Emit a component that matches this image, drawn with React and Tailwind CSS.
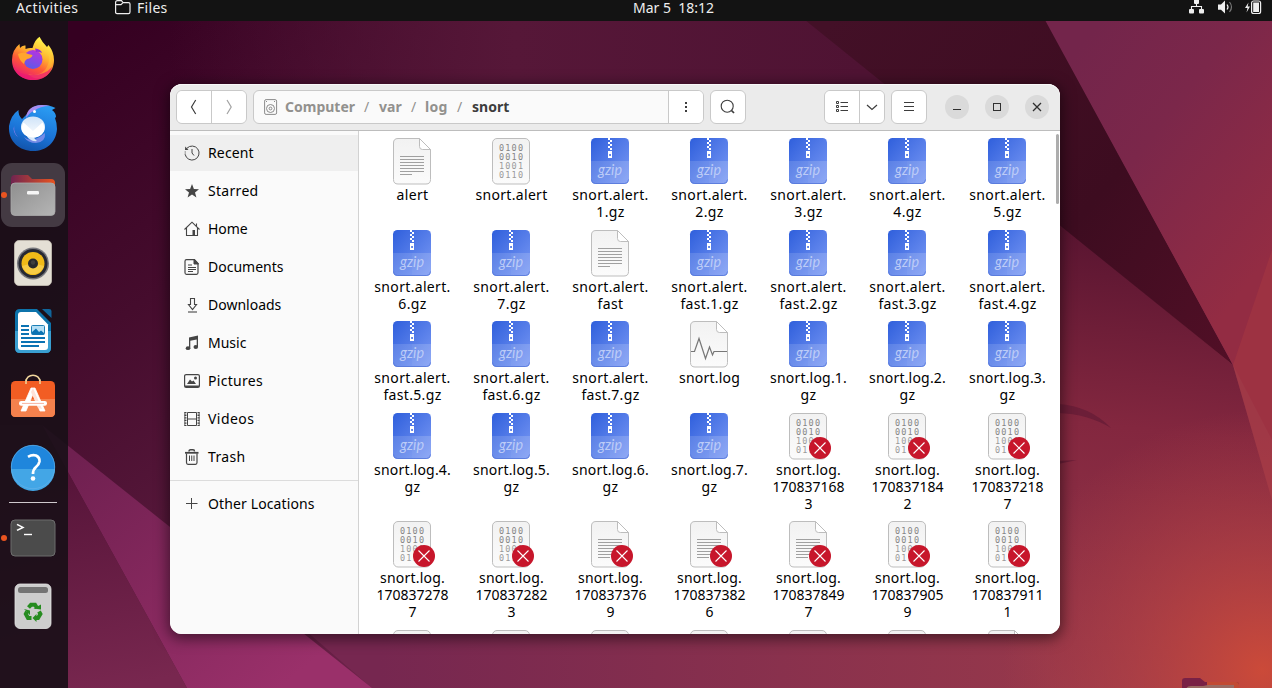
import React from "react";

const FONT = "font-['Noto_Sans',sans-serif]";

function Wallpaper() {
  return (
    <svg className="absolute inset-0" width="1272" height="688" viewBox="0 0 1272 688">
      <defs>
        <linearGradient id="base" gradientUnits="userSpaceOnUse" x1="80" y1="40" x2="560" y2="720">
          <stop offset="0" stopColor="#350021" />
          <stop offset="0.3" stopColor="#450c2d" />
          <stop offset="0.6" stopColor="#5a1a3d" />
          <stop offset="1" stopColor="#7a2751" />
        </linearGradient>
        <linearGradient id="topMid" gradientUnits="userSpaceOnUse" x1="170" y1="0" x2="860" y2="0">
          <stop offset="0" stopColor="#561738" stopOpacity="0" />
          <stop offset="0.5" stopColor="#561738" />
          <stop offset="1" stopColor="#4f1333" />
        </linearGradient>
        <linearGradient id="low" gradientUnits="userSpaceOnUse" x1="1060" y1="230" x2="1010" y2="700">
          <stop offset="0" stopColor="#5a1531" />
          <stop offset="0.4" stopColor="#83273f" />
          <stop offset="1" stopColor="#99394c" />
        </linearGradient>
        <linearGradient id="lowFade" gradientUnits="userSpaceOnUse" x1="380" y1="0" x2="1060" y2="0">
          <stop offset="0" stopColor="#762750" />
          <stop offset="1" stopColor="#96384b" />
        </linearGradient>
        <radialGradient id="glow" gradientUnits="userSpaceOnUse" cx="1262" cy="670" r="260">
          <stop offset="0" stopColor="#cb4a39" />
          <stop offset="0.5" stopColor="#b94442" stopOpacity="0.55" />
          <stop offset="1" stopColor="#b04044" stopOpacity="0" />
        </radialGradient>
        <linearGradient id="dark" gradientUnits="userSpaceOnUse" x1="830" y1="20" x2="1233" y2="365">
          <stop offset="0" stopColor="#431027" />
          <stop offset="0.6" stopColor="#3d0c20" />
          <stop offset="1" stopColor="#520f26" />
        </linearGradient>
        <linearGradient id="right" gradientUnits="userSpaceOnUse" x1="1070" y1="60" x2="1290" y2="230">
          <stop offset="0" stopColor="#73254b" />
          <stop offset="0.4" stopColor="#7b274a" />
          <stop offset="1" stopColor="#932c43" />
        </linearGradient>
        <linearGradient id="beam" gradientUnits="userSpaceOnUse" x1="80" y1="450" x2="280" y2="688">
          <stop offset="0" stopColor="#6f2050" />
          <stop offset="1" stopColor="#9a306a" />
        </linearGradient>
        <linearGradient id="beamLow" gradientUnits="userSpaceOnUse" x1="70" y1="470" x2="120" y2="688">
          <stop offset="0" stopColor="#561439" />
          <stop offset="1" stopColor="#78274f" />
        </linearGradient>
      </defs>
      <rect width="1272" height="688" fill="url(#base)" />
      <rect x="170" y="20" width="900" height="90" fill="url(#topMid)" />
      <path d="M372 688L305 630H1060V200L1233 365L1272 420V688Z" fill="url(#lowFade)" />
      <path d="M1050 216L1233 365L1272 500V688H1050Z" fill="url(#low)" />
      <rect x="900" y="365" width="372" height="323" fill="url(#glow)" />
      <path d="M805 20H1046L1233 365Z" fill="url(#dark)" />
      <path d="M1045 20H1272V440L1233 365Z" fill="url(#right)" />
      <path d="M1272 250L1233 365L1272 500Z" fill="#a83842" opacity="0.5" />
      <path d="M42 425L372 688H187Z" fill="url(#beam)" />
      <path d="M42 425L187 688H0V425Z" fill="url(#beamLow)" />
      <path d="M1058 404Q1090 406 1111 428Q1088 414 1058 413Z" fill="#6c1e38" />
      <path d="M1058 461L1077 460L1058 464Z" fill="#6c1e38" />
      <path d="M1182 690V681Q1182 678 1185 678H1200L1205 682H1236Q1239 682 1239 685V690Z" fill="#7a2145" />
      <path d="M1207 682H1236Q1239 682 1239 685V690H1207Z" fill="#c24a33" />
      <path d="M1186 690Q1186 686 1191 686H1203L1208 685H1234V690Z" fill="#9b6a62" />
    </svg>
  );
}

function Slot({ children, active, running }) {
  return (
    <div className="relative h-[68px] w-[68px] shrink-0">
      {active && <div className="absolute left-px top-[2px] h-16 w-16 rounded-[11px] bg-[#443a43]" />}
      {running && <div className="absolute left-[1px] top-[31px] h-[6px] w-[6px] rounded-full bg-[#e95420]" />}
      <svg className="relative block" width="68" height="68" viewBox="0 0 68 68">{children}</svg>
    </div>
  );
}

function Dock() {
  return (
    <div className="flex w-[68px] flex-col bg-[#180f17]/90 pt-1">
      <Slot>
        <defs>
          <linearGradient id="fx" x1="0.75" y1="0.1" x2="0.3" y2="1">
            <stop offset="0" stopColor="#fff14a" />
            <stop offset="0.35" stopColor="#ffb02e" />
            <stop offset="0.62" stopColor="#ff5a36" />
            <stop offset="1" stopColor="#e8147a" />
          </linearGradient>
          <linearGradient id="fxp" x1="0.7" y1="0" x2="0.3" y2="1">
            <stop offset="0" stopColor="#b833e1" />
            <stop offset="1" stopColor="#5b5be8" />
          </linearGradient>
        </defs>
        <path d="M12 35Q12 25 19.5 19L20 23Q22 20 25.500 20.500V24Q29 22.500 32.500 23Q34.500 15 39.500 11.700Q42 17 47 22L48.500 20Q54 27 54 35C54 47 45 55 33 55S12 47 12 35Z" fill="url(#fx)" />
        <path d="M45 22Q53 34 45 45Q38 52 28 49Q38 58 48 49Q57 38 45 22Z" fill="#ffd43a" opacity="0.35" />
        <path d="M13 40Q19 51 33 50Q45 50 52 42Q48 55 33 55Q17 54 13 40Z" fill="#ed1a72" opacity="0.7" />
        <circle cx="33" cy="34.500" r="9.500" fill="url(#fxp)" />
        <path d="M18 29Q24 26.500 28 29L32.500 30Q32 33 27 34Q24 36 24 39Q19 35 18 29Z" fill="#ffa52e" />
        <path d="M35 23.500Q41 24 42 28Q38 26 36 27Z" fill="#9130d6" />
      </Slot>
      <Slot>
        <defs>
          <linearGradient id="tb" x1="0.6" y1="0" x2="0.3" y2="1">
            <stop offset="0" stopColor="#2a9bf2" />
            <stop offset="0.6" stopColor="#1a72d6" />
            <stop offset="1" stopColor="#1252a8" />
          </linearGradient>
          <linearGradient id="mail" x1="0" y1="0" x2="0" y2="1">
            <stop offset="0" stopColor="#cfe3f8" />
            <stop offset="1" stopColor="#ffffff" />
          </linearGradient>
        </defs>
        <path d="M9 33Q11 22 18.500 17Q18 22 22 26L28 20Q32 12 42 12Q50 12 55.500 15L52 17Q56 20 56 24L55 25Q57 30 57 36C56 50 46 58 33 58S8 49 9 33Z" fill="url(#tb)" />
        <path d="M26 25Q27 12.500 42 12Q47 12 50 13Q40 13 34 18Q30 19 26 25Z" fill="#a88df0" />
        <path d="M15 29Q12 38 18 44Q14.500 42 13.500 36Z" fill="#8a7de8" />
        <path d="M24 44Q32 51 45 40Q46 49 36 50Q28 50 24 44Z" fill="#8b93ee" opacity="0.8" />
        <ellipse cx="33" cy="34" rx="12" ry="10.500" fill="url(#mail)" />
        <path d="M26 42Q30 49 37 48Q34 46 34 43Z" fill="#d9e9fa" />
        <path d="M23.500 29.500L33 38L42.500 29.500Q45 34 44 38Q40 45 33 44.500Q25 44 22 38Q21 34 23.500 29.500Z" fill="#fff" />
        <circle cx="34.500" cy="18.500" r="1.500" fill="#fff" />
      </Slot>
      <Slot active running>
        <defs>
          <linearGradient id="fld" x1="0" x2="1" y1="0" y2="0">
            <stop offset="0" stopColor="#702450" />
            <stop offset="1" stopColor="#e95420" />
          </linearGradient>
          <linearGradient id="fldf" x1="0" x2="1" y1="0" y2="1">
            <stop offset="0" stopColor="#8f8f8f" />
            <stop offset="1" stopColor="#b5b5b5" />
          </linearGradient>
        </defs>
        <path d="M11 30V18Q11 14 15 14H28L32 18H51Q55 18 55 22V30Z" fill="url(#fld)" />
        <rect x="11" y="22" width="44" height="32.500" rx="4" fill="url(#fldf)" stroke="#aaa" strokeWidth="0.800" />
        <rect x="27" y="30" width="12" height="3.500" rx="1.200" fill="#f6f6f6" />
      </Slot>
      <Slot>
        <rect x="14.500" y="11.500" width="37" height="45" rx="4.500" fill="#e4dfd5" stroke="#c9c3b8" strokeWidth="0.800" />
        <circle cx="33" cy="34.500" r="16" fill="#77777c" />
        <circle cx="33" cy="34.500" r="14.500" fill="#262833" />
        <circle cx="33" cy="34.500" r="11.500" fill="#f0ba18" />
        <path d="M22 37A11.500 11.500 0 0 0 44 37L33 34Z" fill="#f7cc45" />
        <circle cx="33" cy="34.500" r="5" fill="#27282c" />
        <circle cx="33" cy="33.500" r="2.200" fill="#3e3e3e" />
      </Slot>
      <Slot>
        <path d="M20 12H37L51 26V51Q51 56 46 56H20Q15 56 15 51V17Q15 12 20 12Z" fill="#0d73ab" />
        <path d="M15 34H51V51Q51 56 46 56H20Q15 56 15 51Z" fill="#399fd1" />
        <path d="M21 15H36L48 27.500V50Q48 53 45 53H21Q18 53 18 50V18Q18 15 21 15Z" fill="#fff" />
        <path d="M42 12H49Q51.500 12 51.500 14V21Z" fill="#10659b" />
        <path d="M21 29H29M21 33H29M21 37H29M21 41H45M21 45H45M21 49H39" stroke="#0b73b3" strokeWidth="1.800" />
        <rect x="31.500" y="28.500" width="13" height="9" rx="1" fill="#b4dff5" stroke="#1d7fb6" />
        <path d="M32 37.500V35L36 31.500L39 35L41 33.500L44 36V37.500Z" fill="#0b73b3" />
      </Slot>
      <Slot>
        <path d="M26 19V17C26 8 40 8 40 17V19" fill="none" stroke="#f0d59c" strokeWidth="1.500" />
        <rect x="11" y="16" width="44" height="36" rx="4.500" fill="#f25d23" />
        <path d="M11 34H55V47.500Q55 52 50.500 52H15.500Q11 52 11 47.500Z" fill="#f4814d" />
        <path d="M26 14.500V19M40 14.500V19" stroke="#f0d59c" strokeWidth="1.500" />
        <path d="M31 23L21 46H26L33 29L40 46H45L35 23Z" fill="#fff" stroke="#fff" strokeWidth="0.800" />
        <path d="M33 23L42 44L38 43L31 27Z" fill="#ffe2d8" />
        <rect x="19" y="36" width="28" height="4.800" rx="2.200" fill="#fff" />
        <path d="M22 38.400H44" stroke="#f6b3a0" strokeWidth="1" />
      </Slot>
      <Slot>
        <circle cx="33" cy="34" r="22" fill="#1f86dc" />
        <path d="M11 36H55A22 22 0 0 1 11 36Z" fill="#43a6e6" />
        <circle cx="33" cy="34" r="21.700" fill="none" stroke="#63b2ea" strokeWidth="0.700" />
        <path d="M28 23.800Q32 21.500 36 22.500Q40 24.500 39.500 28.500Q39 31.500 36 34Q33 36.500 33 41" fill="none" stroke="#fff" strokeWidth="2.700" />
        <circle cx="33" cy="45.500" r="2.300" fill="#fff" />
      </Slot>
      <div className="mx-[9px] my-px h-px w-12 bg-[#cfc9cd]" />
      <Slot running>
        <rect x="11" y="16" width="44" height="36" rx="4" fill="#4b4b4b" stroke="#6d6d6d" />
        <path d="M17 20.500L23 24L17 27.500" fill="none" stroke="#fff" strokeWidth="1.700" transform="translate(0,3) scale(1,.85)" />
        <path d="M24 30.500H32" stroke="#fff" strokeWidth="1.400" />
      </Slot>
      <Slot>
        <rect x="15" y="12" width="36" height="44.500" rx="5" fill="#cdcdcd" stroke="#e3e3e3" strokeWidth="0.800" />
        <rect x="18" y="15" width="30" height="6" rx="2.500" fill="#747474" />
        <g fill="none" stroke="#268c20" strokeWidth="4">
          <path d="M28.500 35.500L31 32.800H35L37 36" />
          <path d="M27 39.500L25.800 42L28 46H31.500" />
          <path d="M35 46H38L40.400 42L39 39.500" />
        </g>
        <path d="M33.500 36.500L41 37.500V32.500Z M24 37L30 38.500L30 43Z M36.500 42V50L32.500 46Z" fill="#268c20" />
      </Slot>
    </div>
  );
}

function TopBar() {
  return (
    <div className="relative flex h-[21px] shrink-0 bg-[#131313] text-[14px] leading-[15px] text-[#eeeeee]">
      <span className="ml-4 w-[98px] tracking-[0.4px]">Activities</span>
      <svg className="mt-[-1px]" width="17" height="17" viewBox="0 0 17 17" fill="none" stroke="#eee" strokeWidth="1.200">
        <path d="M1.600 14V3.500Q1.600 1.600 3.500 1.600H7.500L9 3.600H14.500Q16 3.600 16 5V13Q16 14.600 14.500 14.600H3Q1.600 14.600 1.600 13Z M1.600 5.600H7L9 3.600" />
      </svg>
      <span className="ml-[6px] tracking-[0.3px]">Files</span>
      <span className="absolute left-[633px] top-0 whitespace-pre">Mar 5  18:12</span>
      <svg className="ml-auto mr-[9px]" width="74" height="16" viewBox="1189 0 74 16" fill="#eee">
        <rect x="1194" y="-1" width="5" height="5" rx="1" />
        <rect x="1189" y="9" width="5" height="4.500" rx="1" />
        <rect x="1199" y="9" width="5" height="4.500" rx="1" />
        <path d="M1196.500 3V6.500M1191.500 10V6.500H1201.500V10" fill="none" stroke="#eee" strokeWidth="1.100" />
        <path d="M1218 4.500H1221L1225 0.500V13.500L1221 9.800H1218Z" />
        <path d="M1227 4.500Q1229 7 1227 9.500" fill="none" stroke="#eee" strokeWidth="1.200" />
        <path d="M1229.500 2Q1233.500 7 1229.500 12" fill="none" stroke="#777" strokeWidth="1.200" />
        <path d="M1248.500 2.500L1245 8H1247.500L1246.500 12.500L1250 6.500H1247.700Z" />
        <rect x="1251.600" y="1" width="9" height="12.500" rx="2" fill="none" stroke="#eee" strokeWidth="1.200" />
        <rect x="1253.200" y="2.500" width="5.800" height="9.500" />
      </svg>
    </div>
  );
}

const btn = "flex items-center justify-center bg-white";

function Header() {
  return (
    <div className="flex h-[47px] shrink-0 items-start rounded-t-xl border-b border-[#bdbdbd] bg-[#ebebeb] pl-[6px] pt-[6px] shadow-[inset_0_1px_0_#f8f8f8]">
      <div className="flex h-[34px] w-[71px] overflow-hidden rounded-md border border-[#c9c9c9]">
        <div className={`${btn} w-[35px] border-r border-[#c9c9c9]`}>
          <svg width="16" height="16" viewBox="0 0 16 16" fill="none" stroke="#3d3d3d" strokeWidth="1.200"><path d="M9.700 1L5.500 8L9.700 15" /></svg>
        </div>
        <div className={`${btn} flex-1`}>
          <svg width="16" height="16" viewBox="0 0 16 16" fill="none" stroke="#a2a2a2" strokeWidth="1.200"><path d="M6 1L10.200 8L6 15" /></svg>
        </div>
      </div>
      <div className="ml-[6px] flex h-[34px] w-[451px] overflow-hidden rounded-md border border-[#c9c9c9] bg-[#fafafa] text-[14px] font-bold leading-8 text-[#92918e]">
        <svg className="ml-[10px] mt-2" width="14" height="16" viewBox="0 0 14 16" fill="none" stroke="#8b8b8b">
          <rect x="0.600" y="0.600" width="12" height="14.800" rx="1.500" />
          <circle cx="6.500" cy="9.500" r="4" /><circle cx="6.500" cy="9.500" r="1.400" />
          <path d="M2 2.500H3M10 2.500H11" />
        </svg>
        <span className="ml-[7px] w-[79px]">Computer</span>
        <span className="w-[15px] font-normal">/</span>
        <span className="w-[32px]">var</span>
        <span className="w-[14px] font-normal">/</span>
        <span className="w-[32px] tracking-[0.3px]">log</span>
        <span className="w-[15px] font-normal">/</span>
        <span className="text-[#3d3d3d]">snort</span>
        <div className="ml-auto flex w-[35px] items-center justify-center border-l border-[#c9c9c9] bg-white">
          <svg width="16" height="16" viewBox="0 0 16 16" fill="#3d3d3d"><path d="M7 3h2v2H7zM7 7h2v2H7zM7 11h2v2H7z" /></svg>
        </div>
      </div>
      <div className={`${btn} ml-[6px] h-[34px] w-9 rounded-md border border-[#c9c9c9]`}>
        <svg width="16" height="16" viewBox="0 0 16 16" fill="none" stroke="#3d3d3d" strokeWidth="1.100"><circle cx="7.200" cy="7.200" r="6" /><path d="M11.500 11.500L14 14" strokeWidth="1.700" /></svg>
      </div>
      <div className="ml-[78px] flex h-[34px] w-[61px] overflow-hidden rounded-md border border-[#c9c9c9]">
        <div className={`${btn} w-[35px] border-r border-[#c9c9c9]`}>
          <svg width="14" height="14" viewBox="0 0 14 14" fill="none" stroke="#3d3d3d"><path d="M1.500 1.500h2v2h-2zM1.500 5.500h2v2h-2zM1.500 9.500h2v2h-2zM5.500 2.500H13M5.500 6.500H13M5.500 10.500H13" /></svg>
        </div>
        <div className={`${btn} flex-1`}>
          <svg width="12" height="12" viewBox="0 0 12 12" fill="none" stroke="#3d3d3d" strokeWidth="1.200"><path d="M1 4L6 8.500L11 4" /></svg>
        </div>
      </div>
      <div className={`${btn} ml-[6px] h-[34px] w-9 rounded-md border border-[#c9c9c9]`}>
        <svg width="12" height="12" viewBox="0 0 12 12" stroke="#3d3d3d"><path d="M1 1.500H11M1 5.500H11M1 9.500H11" /></svg>
      </div>
      <div className="ml-[18px] mt-[5px] flex gap-4">
        <div className="flex h-6 w-6 items-center justify-center rounded-full bg-[#dadada]">
          <svg width="10" height="10" viewBox="0 0 10 10" stroke="#2f2f2f"><path d="M1 7.500H9" /></svg>
        </div>
        <div className="flex h-6 w-6 items-center justify-center rounded-full bg-[#dadada]">
          <svg width="10" height="10" viewBox="0 0 10 10" fill="none" stroke="#2f2f2f"><rect x="1.500" y="1.500" width="7" height="7" /></svg>
        </div>
        <div className="flex h-6 w-6 items-center justify-center rounded-full bg-[#dadada]">
          <svg width="10" height="10" viewBox="0 0 10 10" stroke="#2f2f2f" strokeWidth="1.300"><path d="M1 1L9 9M9 1L1 9" /></svg>
        </div>
      </div>
    </div>
  );
}

const INK = "#454545";
const PLACES = [
  ["Recent", <g fill="none" stroke={INK}><path d="M3 3.200A7 7 0 1 1 1.200 9.500" /><path d="M8 4V8L10 10.500" /><path d="M1.200 1.500L1 5H4.500Z" fill={INK} stroke="none" /><path d="M1.200 6.500V9.500" strokeDasharray="1 1" /></g>, "tracking-[0.15px]"],
  ["Starred", <path d="M8 1L9.900 6L15 6.200L11 9.400L12.400 14.500L8 11.600L3.600 14.500L5 9.400L1 6.200L6.100 6Z" fill={INK} />, "tracking-[0.3px]"],
  ["Home", <g fill="none" stroke={INK} strokeWidth="1.100"><path d="M0.500 8.500L8 1.200L15.500 8.500M2.500 7V14.500H13.500V7M12.500 2.500V5" /><path d="M8.500 9H11V14.500H8.500Z" fill={INK} stroke="none" /></g>, "tracking-[-0.05px]"],
  ["Documents", <g fill="none" stroke={INK} strokeWidth="1.200"><path d="M3 0.700H10.500L14 4.500V13.800Q14 15.300 12.500 15.300H2.500Q1 15.300 1 13.800V2.200Q1 .7 2.500 .7Z" /><path d="M10 .5L14.500 5H10ZM4 6H8" fill={INK} strokeWidth="1" /><path d="M4 8.500H12M4 10.500H12M4 12.500H9" strokeWidth="1" /></g>, "tracking-[0px]"],
  ["Downloads", <g fill="none" stroke={INK} strokeWidth="1.100"><path d="M6.500 1.500H10.500V7.500H12.500L8.500 12.500L4.500 7.500H6.500Z" /><path d="M4 15H13" /></g>, ""],
  ["Music", <g fill={INK}><path d="M5 2.500L14 .5V12H12.700V4.500L6.300 5.800V13.500H5Z" /><ellipse cx="4" cy="13.200" rx="2.300" ry="1.900" /><ellipse cx="11.800" cy="12" rx="2.300" ry="1.900" /></g>, "tracking-[0px]"],
  ["Pictures", <g><rect x=".6" y="1.600" width="14.800" height="12.800" rx="1.500" fill="none" stroke={INK} strokeWidth="1.200" /><path d="M1 12.500H15V14H1ZM3 11L6 6.500L8 8.500L9.500 7.500L12 11Z" fill={INK} /><circle cx="11.500" cy="5" r="1.500" fill={INK} /></g>, "tracking-[0.3px]"],
  ["Videos", <g fill="none" stroke={INK}><path d="M3.500 1.500H12.500V14.500H3.500ZM3.500 8H12.500" /><path d="M1.500 1V15M14.500 1V15" strokeWidth="2" strokeDasharray="1.300 1.300" /><path d="M.8 1V15M15.200 1V15" strokeWidth=".8" /></g>, "tracking-[0.45px]"],
  ["Trash", <g fill="none" stroke={INK}><path d="M2.500 4.500V13.500Q2.500 15.300 4 15.300H11.500Q13 15.300 13 13.500V4.500" strokeWidth="1.200" /><path d="M1 3.800H14.500" strokeWidth="1.800" /><path d="M5 2.500Q5 .8 6.500 .8H9Q10.500 .8 10.500 2.500" strokeWidth="1.500" /><path d="M5.500 6.500V12M7.750 6.500V12M10 6.500V12" /></g>, "tracking-[0.35px]"],
];

function Place({ name, icon, track, active }) {
  return (
    <div className={`flex h-9 items-center pl-[14px] ${active ? "bg-[#efefef]" : ""}`}>
      <svg width="16" height="16" viewBox="0 0 16 16">{icon}</svg>
      <span className={`-mt-[2px] ml-2 ${track}`}>{name}</span>
    </div>
  );
}

function Sidebar() {
  return (
    <div className="w-[189px] shrink-0 rounded-bl-xl border-r border-[#d2d2d2] bg-[#fafafa] pt-1 text-[14px] text-black">
      <div className="flex flex-col gap-[2px]">
        {PLACES.map(([name, icon, track], i) => <Place key={name} name={name} icon={icon} track={track} active={i === 0} />)}
      </div>
      <div className="mb-[5px] mt-[5px] h-px bg-[#dcdcdc]" />
      <Place name="Other Locations" track="tracking-[0.12px]" icon={<path d="M2 7.500H13.500M7.500 2V13" stroke={INK} fill="none" />} />
    </div>
  );
}

function FileIcon({ kind }) {
  const base = kind[0];
  return (
    <svg className="-ml-px block shrink-0 overflow-visible" width="38" height="47" viewBox="0 0 38 47">
      {base === "g" && (
        <g>
          <rect width="38" height="46" rx="4.500" fill="url(#gz)" />
          <path d="M0 23H38V41.500Q38 46 33.500 46H4.500Q0 46 0 41.500Z" fill="#fff" fillOpacity="0.13" />
          <rect x="19" y="23" width="19" height="22" fill="#fff" fillOpacity="0.04" />
          <path d="M0.500 41.500Q.5 45.500 4.500 45.500H33.500Q37.500 45.500 37.500 41.500" fill="none" stroke="#5476d8" strokeWidth="0.800" />
          <path d="M17 0h2v2h-2zM19 2h2v2h-2zM17 4h2v2h-2zM19 6h2v2h-2zM17 8h2v2h-2zM19 10h2v2h-2z" fill="#fff" />
          <path d="M17 13h4v7h-4zM18.200 16v2h1.700v-2z" fill="#fff" fillRule="evenodd" />
          <text x="7" y="37" fontFamily="Lato, sans-serif" fontStyle="italic" fontWeight="400" fontSize="15.500" textLength="24" lengthAdjust="spacingAndGlyphs" fill="#bccbf7">gzip</text>
        </g>
      )}
      {(base === "b" || base === "p") && (
        <g>
          <rect x="0.500" y="0.500" width="37" height="45.500" rx="4.500" fill="url(#paper)" stroke="#bdbdbd" />
          {base === "b" && (
            <g fontFamily="'DejaVu Sans Mono', monospace" fontSize="8.500" fill="#858585">
              <text x="7" y="13" textLength="24">0100</text>
              <text x="7" y="22" textLength="24">0010</text>
              <text x="7" y="31" textLength="24" fill="#9a9a9a">1001</text>
              <text x="7" y="40" textLength="24" fill="#9a9a9a">0110</text>
            </g>
          )}
        </g>
      )}
      {(base === "t" || base === "l") && (
        <g>
          <path d="M5 .5H26.500L37.500 11.500V41.500Q37.500 46 33 46H5Q.5 46 .5 41.500V5Q.5 .5 5 .5Z" fill="url(#paper)" stroke="#bdbdbd" />
          <path d="M26.500 .5V8.500Q26.500 11.500 29.500 11.500H37.500Z" fill="#fff" stroke="#bdbdbd" />
          {base === "t" && <path d="M7 18.500H31M7 21.500H31M7 24.500H31M7 27.500H31M7 30.500H31M7 33.500H31M7 36.500H19" stroke="#a0a0a0" />}
          {base === "l" && <path d="M1 30.500H4.500L9 17.500L15.500 37.500L19.500 26L22.500 34L24 30.500H37" fill="none" stroke="#777" strokeWidth="1.200" />}
        </g>
      )}
      {kind[1] === "x" && (
        <g>
          <circle cx="31" cy="35" r="11" fill="#c7162b" />
          <path d="M25.500 29.500L36.500 40.500M36.500 29.500L25.500 40.500" stroke="#fff" strokeWidth="1.100" />
        </g>
      )}
    </svg>
  );
}

const ROWS = [
  { h: "h-[92px]", files: [["t", "alert"], ["b", "snort.alert"], ["g", "snort.alert.", "1.gz"], ["g", "snort.alert.", "2.gz"], ["g", "snort.alert.", "3.gz"], ["g", "snort.alert.", "4.gz"], ["g", "snort.alert.", "5.gz"]] },
  { h: "h-[91px]", files: [["g", "snort.alert.", "6.gz"], ["g", "snort.alert.", "7.gz"], ["t", "snort.alert.", "fast"], ["g", "snort.alert.", "fast.1.gz"], ["g", "snort.alert.", "fast.2.gz"], ["g", "snort.alert.", "fast.3.gz"], ["g", "snort.alert.", "fast.4.gz"]] },
  { h: "h-[92px]", files: [["g", "snort.alert.", "fast.5.gz"], ["g", "snort.alert.", "fast.6.gz"], ["g", "snort.alert.", "fast.7.gz"], ["l", "snort.log"], ["g", "snort.log.1.", "gz"], ["g", "snort.log.2.", "gz"], ["g", "snort.log.3.", "gz"]] },
  { h: "h-[108px]", files: [["g", "snort.log.4.", "gz"], ["g", "snort.log.5.", "gz"], ["g", "snort.log.6.", "gz"], ["g", "snort.log.7.", "gz"], ["bx", "snort.log.", "170837168", "3"], ["bx", "snort.log.", "170837184", "2"], ["bx", "snort.log.", "170837218", "7"]] },
  { h: "h-[109px]", files: [["bx", "snort.log.", "170837278", "7"], ["bx", "snort.log.", "170837282", "3"], ["tx", "snort.log.", "170837376", "9"], ["tx", "snort.log.", "170837382", "6"], ["tx", "snort.log.", "170837849", "7"], ["bx", "snort.log.", "170837905", "9"], ["bx", "snort.log.", "170837911", "1"]] },
  { h: "h-[47px]", files: [["p"], ["p"], ["p"], ["p"], ["p"], ["p"], ["t"]] },
];

function labelTracking(line) {
  if (/^\d+$/.test(line)) return "";
  if (line.startsWith("snort.log")) return "tracking-[0.2px]";
  return "tracking-[0.33px]";
}

function Files() {
  return (
    <div className="relative flex-1 overflow-hidden rounded-br-xl bg-white pl-[4px] pt-[7px]">
      <svg className="absolute" width="0" height="0">
        <defs>
          <linearGradient id="gz" x1="0" y1="0" x2="1" y2="1">
            <stop offset="0" stopColor="#2f5fdc" />
            <stop offset="1" stopColor="#7b9af5" />
          </linearGradient>
          <linearGradient id="paper" x1="0" y1="0" x2="0" y2="1">
            <stop offset="0" stopColor="#f2f2f2" />
            <stop offset="1" stopColor="#fbfbfb" />
          </linearGradient>
        </defs>
      </svg>
      {ROWS.map((row, r) => (
        <div key={r} className={`grid grid-cols-[99px_99px_99px_99px_99px_99px_101px] ${row.h}`}>
          {row.files.map(([kind, ...lines], c) => (
            <div key={c} className="flex flex-col items-center text-[14px] leading-[17px] text-black">
              <FileIcon kind={kind} />
              <div className="mt-px text-center">
                {lines.map((line) => (
                  <div key={line} className={labelTracking(line)}>{line}</div>
                ))}
              </div>
            </div>
          ))}
        </div>
      ))}
      <div className="absolute right-px top-[3px] h-[70px] w-[3px] rounded-full bg-[#adadad]" />
    </div>
  );
}

export default function App() {
  return (
    <div className={`relative h-[688px] w-[1272px] overflow-hidden ${FONT}`}>
      <Wallpaper />
      <div className="relative flex h-full flex-col">
        <TopBar />
        <div className="flex flex-1">
          <Dock />
          <div className="ml-[102px] mt-[63px] flex h-[550px] w-[890px] flex-col rounded-xl bg-white shadow-[0_3px_14px_2px_rgba(0,0,0,0.5)]">
            <Header />
            <div className="flex min-h-0 flex-1">
              <Sidebar />
              <Files />
            </div>
          </div>
        </div>
      </div>
    </div>
  );
}
